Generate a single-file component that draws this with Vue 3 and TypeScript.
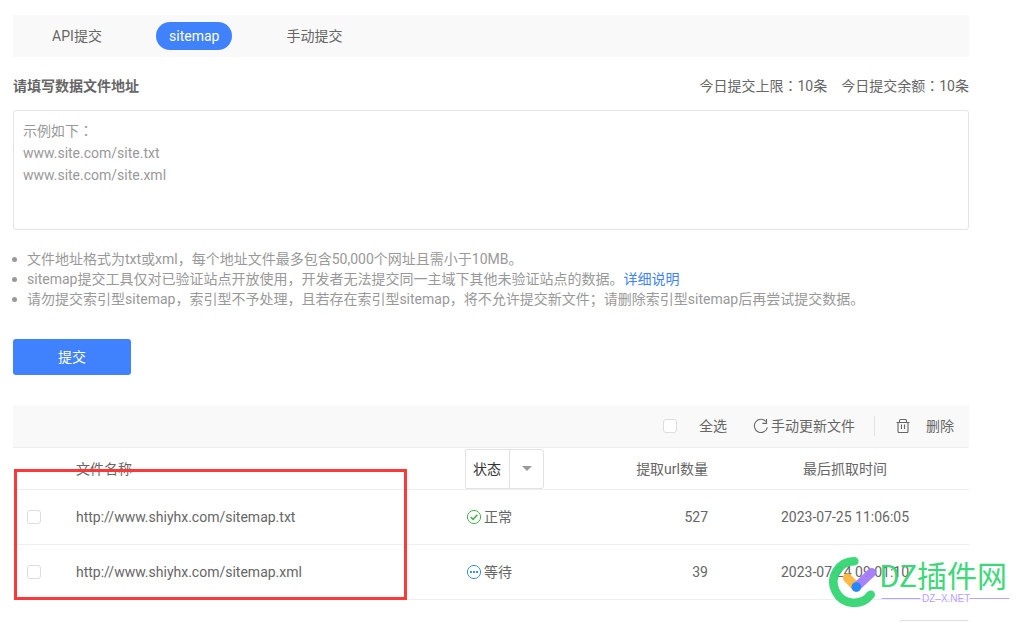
<script setup lang="ts">
import { ref } from 'vue'

interface SitemapFile {
  url: string
  status: 'ok' | 'wait'
  count: number
  fetched: string
}

const tabs: string[] = ['API提交', 'sitemap', '手动提交']
const active = ref<string>('sitemap')
const address = ref<string>('')
const example = '示例如下：\nwww.site.com/site.txt\nwww.site.com/site.xml'
const selected = ref<string[]>([])

const files: SitemapFile[] = [
  { url: 'http://www.shiyhx.com/sitemap.txt', status: 'ok', count: 527, fetched: '2023-07-25 11:06:05' },
  { url: 'http://www.shiyhx.com/sitemap.xml', status: 'wait', count: 39, fetched: '2023-07-24 09:01:10' },
]

function toggleAll(event: Event): void {
  const on = (event.target as HTMLInputElement).checked
  selected.value = on ? files.map((f) => f.url) : []
}
</script>

<template>
  <div class="page">
    <main class="content">
      <nav class="tabs">
        <button
          v-for="tab in tabs"
          :key="tab"
          type="button"
          class="tab"
          :class="{ active: tab === active }"
          @click="active = tab"
        >{{ tab }}</button>
      </nav>

      <div class="heading">
        <label for="address" class="title">请填写数据文件地址</label>
        <div class="quota">
          <span>今日提交上限：10条</span>
          <span>今日提交余额：10条</span>
        </div>
      </div>
      <textarea id="address" v-model="address" class="address" :placeholder="example"></textarea>

      <ul class="notes">
        <li>文件地址格式为txt或xml，每个地址文件最多包含50,000个网址且需小于10MB。</li>
        <li>sitemap提交工具仅对已验证站点开放使用，开发者无法提交同一主域下其他未验证站点的数据。<a href="#">详细说明</a></li>
        <li>请勿提交索引型sitemap，索引型不予处理，且若存在索引型sitemap，将不允许提交新文件；请删除索引型sitemap后再尝试提交数据。</li>
      </ul>

      <button type="button" class="submit">提交</button>

      <section class="panel">
        <div class="toolbar">
          <label class="all"><input type="checkbox" class="check" @change="toggleAll" />全选</label>
          <button type="button" class="tool refresh">
            <svg width="16" height="16" viewBox="0 0 16 16" fill="none" stroke="#666" stroke-width="1.1">
              <path d="M12.8 3.4A6.6 6.6 0 1 0 14.4 9.4" />
              <path d="M13.5 1v4.4H9.4" />
            </svg>手动更新文件
          </button>
          <button type="button" class="tool delete">
            <svg width="14" height="16" viewBox="0 0 14 16" fill="none" stroke="#666" stroke-width="1.1">
              <path d="M.5 4.5h13M3.5 4.5V2.5q0-1 1-1h5q1 0 1 1v2M2 4.5v9q0 1 1 1h8q1 0 1-1v-9M5.5 6.5V11M8.5 6.5V11" />
            </svg>删除
          </button>
        </div>
        <table class="files">
          <colgroup>
            <col class="c-check" />
            <col />
            <col class="c-status" />
            <col class="c-count" />
            <col class="c-date" />
          </colgroup>
          <thead>
            <tr>
              <th></th>
              <th class="name">文件名称</th>
              <th>
                <div class="filter">
                  <select aria-label="状态">
                    <option>状态</option>
                    <option>正常</option>
                    <option>等待</option>
                  </select>
                  <span class="arrow"></span>
                </div>
              </th>
              <th class="count">提取url数量</th>
              <th class="date">最后抓取时间</th>
            </tr>
          </thead>
          <tbody>
            <tr v-for="file in files" :key="file.url">
              <td class="pick"><input v-model="selected" type="checkbox" class="check" :value="file.url" :aria-label="file.url" /></td>
              <td class="name">{{ file.url }}</td>
              <td>
                <span class="status">
                  <svg v-if="file.status === 'ok'" width="16" height="16" viewBox="0 0 16 16" fill="none" stroke="#4caf50">
                    <circle cx="8" cy="8" r="6.6" />
                    <path d="M4.8 8.2l2.4 2.2 4.2-4.6" stroke-width="1.6" />
                  </svg>
                  <svg v-else width="16" height="16" viewBox="0 0 16 16" fill="none" stroke="#3d8fd9">
                    <circle cx="8" cy="8" r="6.6" />
                    <path d="M4 8h2M7 8h2M10 8h2" stroke-width="1.8" />
                  </svg>{{ file.status === 'ok' ? '正常' : '等待' }}
                </span>
              </td>
              <td class="count">{{ file.count }}</td>
              <td class="date">{{ file.fetched }}</td>
            </tr>
          </tbody>
        </table>
        <div class="marker"></div>
      </section>
      <div class="pager"><button type="button" class="page-size" aria-label="分页"></button></div>
    </main>

    <svg class="watermark" width="186" height="56" viewBox="826 554 186 56" fill="none" stroke-linecap="round">
      <path d="M854.3 561.2A20.8 20.8 0 1 0 870.7 594.7" stroke="#34d673" stroke-width="8.6" />
      <path d="M847.4 577.8L856.3 587" stroke="#ffb63c" stroke-width="9" />
      <path d="M856.3 587L871.6 572.4" stroke="#a47cfb" stroke-width="9" />
      <circle cx="856.3" cy="587" r="4.8" fill="#1883ff" />
      <text x="879" y="587" class="brand">DZ插件网</text>
      <path d="M882 598.5H920M970 598.5H1009" stroke="#b79cff" />
      <text x="922" y="602" class="domain">DZ–X.NET</text>
    </svg>
  </div>
</template>

<style>
body {
  margin: 0;
  background: #fff;
}
</style>

<style scoped>
.page {
  position: relative;
  height: 100vh;
  overflow: hidden;
  color: #666;
  font: 14px/20px Roboto, "Noto Sans CJK SC", sans-serif;
}
.content {
  padding: 15px 60px 0 13px;
}
button,
textarea,
select {
  font: inherit;
  color: inherit;
}
button {
  border: 0;
  background: none;
  padding: 0;
  cursor: pointer;
}
.tabs {
  display: flex;
  align-items: center;
  gap: 41px;
  height: 42px;
  padding-left: 26px;
  background: #f9f9f9;
}
.tab {
  min-width: 76px;
  height: 28px;
  padding: 0 13px;
  border-radius: 14px;
}
.tab.active {
  color: #fff;
  background: #4082fe;
}
.heading {
  display: flex;
  justify-content: space-between;
  margin: 19px 0 14px;
}
.title {
  font-weight: 700;
}
.quota {
  display: flex;
  gap: 14px;
  font-family: Roboto, "Noto Sans CJK TC", sans-serif;
}
.address {
  display: block;
  box-sizing: border-box;
  width: 100%;
  height: 120px;
  padding: 9px;
  border: 1px solid #e4e4e4;
  border-radius: 3px;
  font-family: Roboto, "Noto Sans CJK TC", sans-serif;
  line-height: 22px;
  resize: none;
}
.address::placeholder {
  color: #999;
  opacity: 1;
}
.notes {
  margin: 19px 0 30px;
  padding-left: 14px;
  color: #999;
  list-style: none;
}
.notes li {
  position: relative;
  white-space: nowrap;
}
.notes li::before {
  content: "";
  position: absolute;
  left: -15px;
  top: 8px;
  width: 5px;
  height: 5px;
  border-radius: 50%;
  background: #999;
}
.notes a {
  color: #4082fe;
  text-decoration: none;
}
.submit {
  display: block;
  width: 118px;
  height: 36px;
  border-radius: 3px;
  color: #fff;
  background: #4082fe;
}
.panel {
  position: relative;
  margin-top: 30px;
}
.toolbar {
  display: flex;
  align-items: center;
  justify-content: flex-end;
  height: 42px;
  padding-right: 15px;
  border-bottom: 1px solid #eee;
  background: #f9f9f9;
}
.check {
  appearance: none;
  box-sizing: border-box;
  display: block;
  width: 14px;
  height: 14px;
  margin: 0;
  border: 1px solid #ddd;
  border-radius: 3px;
  background: #fff;
}
.check:checked {
  background: #4082fe;
}
.all {
  display: flex;
  align-items: center;
  gap: 22px;
}
.tool {
  display: flex;
  align-items: center;
}
.refresh {
  gap: 2px;
  margin-left: 26px;
}
.delete {
  gap: 16px;
  margin-left: 19px;
  padding-left: 21px;
  border-left: 1px solid #e4e4e4;
}
.files {
  width: 100%;
  table-layout: fixed;
  border-collapse: separate;
  border-spacing: 0;
}
.c-check { width: 63px; }
.c-status { width: 82px; }
.c-count { width: 161px; }
.c-date { width: 261px; }
th,
td {
  box-sizing: border-box;
  height: 55px;
  padding: 0;
  border-bottom: 1px solid #eee;
  font-weight: 400;
  text-align: left;
}
th {
  height: 42px;
}
.pick {
  padding-left: 14px;
}
.count {
  text-align: right;
}
.date {
  padding-left: 13px;
  text-align: center;
}
.filter {
  position: relative;
  box-sizing: border-box;
  width: 79px;
  height: 40px;
  border: 1px solid #e2e2e2;
  border-radius: 0 3px 3px 0;
}
.filter select {
  appearance: none;
  width: 100%;
  height: 100%;
  padding: 0 0 0 7px;
  border: 0;
  color: #333;
  background: none;
}
.arrow {
  position: absolute;
  inset: 0 0 0 auto;
  display: grid;
  place-items: center;
  width: 33px;
  border-left: 1px solid #e2e2e2;
  pointer-events: none;
}
.arrow::after {
  content: "";
  border: 5px solid transparent;
  border-top-color: #999;
  border-bottom: 0;
}
.status {
  display: flex;
  align-items: center;
  gap: 2px;
  padding-left: 1px;
}
.marker {
  position: absolute;
  left: 1px;
  top: 64px;
  box-sizing: border-box;
  width: 393px;
  height: 131px;
  border: 3px solid #fd3838;
  pointer-events: none;
}
.pager {
  display: flex;
  justify-content: flex-end;
  margin-top: 20px;
}
.page-size {
  width: 70px;
  height: 30px;
  border: 1px solid #ddd;
  border-radius: 3px;
}
.watermark {
  position: absolute;
  top: 554px;
  right: 17px;
  overflow: visible;
  opacity: 0.95;
  pointer-events: none;
}
.brand {
  fill: #34d673;
  font: 400 30px "Noto Sans CJK SC", sans-serif;
}
.domain {
  fill: #b79cff;
  font: 10px "Liberation Sans", sans-serif;
}
</style>
